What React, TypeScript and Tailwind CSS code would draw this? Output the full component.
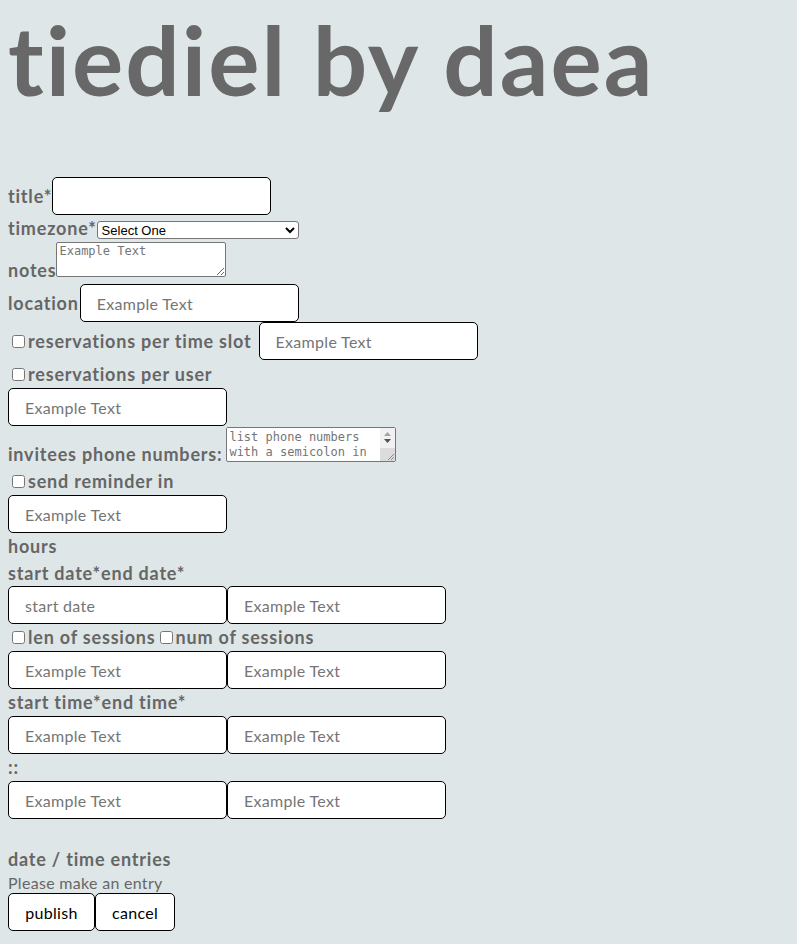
import React from "react";

const field =
  "w-[219px] h-[38px] shrink-0 bg-white border border-black rounded-[5px] pl-4 pr-2 text-[16px] font-normal tracking-[0.3px] text-black placeholder:text-[#757575] outline-none";
const box = "w-[13px] h-[13px] my-[3px] ml-[4px] mr-[3px] shrink-0 self-center";
const mono =
  "font-['DejaVu_Sans_Mono',monospace] text-[12px] leading-[15px] font-normal tracking-normal text-black placeholder:text-[#757575] outline-none";

function TextRow({ children }: { children: React.ReactNode }) {
  return <div className="flex items-center h-[27px]">{children}</div>;
}

function Pair({ first = "Example Text" }: { first?: string }) {
  return (
    <div className="flex h-[38px]">
      <input className={field} placeholder={first} />
      <input className={field} placeholder="Example Text" />
    </div>
  );
}

function Grip() {
  return (
    <svg width="8" height="8" viewBox="0 0 8 8" className="block">
      <path d="M7 1 L1 7 M7 4 L4 7" stroke="#8a8a8a" strokeWidth="1" />
    </svg>
  );
}

// fake classic scrollbar, headless chrome hides the real one
function PhoneArea() {
  return (
    <div className="w-[170px] h-[35px] shrink-0 self-start mt-px flex bg-white border border-[#767676] rounded-[2px]">
      <textarea
        className={`${mono} flex-1 min-w-0 h-[32px] px-[2px] pt-[2px] pb-0 resize-none overflow-hidden bg-white`}
        placeholder="list phone numbers with a semicolon in between each of them"
      />
      <div className="w-[15px] flex flex-col items-center bg-[#f1f1f1]">
        <svg width="9" height="7" viewBox="0 0 9 7" className="mt-[3px]">
          <path d="M4.5 1 L8 5 L1 5 Z" fill="#a3a3a3" />
        </svg>
        <svg width="9" height="7" viewBox="0 0 9 7">
          <path d="M1 1 L8 1 L4.5 5 Z" fill="#505050" />
        </svg>
        <div className="mt-auto w-full h-[13px] bg-[#dcdcdc] flex items-end justify-end">
          <Grip />
        </div>
      </div>
    </div>
  );
}

export default function App() {
  return (
    <div className="min-h-screen bg-[#dee6e8] px-2 pb-3 text-[#666666] font-['Lato',sans-serif] [font-variant-ligatures:none]">
      <h1 className="pt-[11px] text-[96px] leading-none font-bold tracking-[2px] text-[#686868]">
        tiediel by daea
      </h1>

      <form className="mt-[70px] text-[18px] font-bold leading-[27px] tracking-[0.8px]">
        <div className="flex items-baseline h-[38px]">
          <label>title*</label>
          <input className={field} />
        </div>

        <div className="flex items-baseline h-[27px]">
          <label>timezone*</label>
          <select className="w-[202px] h-[18px] bg-white text-black border border-[#767676] rounded-[3px] font-['Liberation_Sans',sans-serif] text-[13px] font-normal tracking-normal leading-none">
            <option>Select One</option>
          </select>
        </div>

        <div className="flex items-end h-[42px]">
          <label>notes</label>
          <textarea
            className={`${mono} w-[170px] h-[35px] shrink-0 self-start bg-white border border-[#767676] rounded-[2px] px-[2px] py-[1px]`}
            placeholder="Example Text"
          />
        </div>

        <div className="flex items-baseline h-[38px]">
          <label className="mr-px">location</label>
          <input className={field} placeholder="Example Text" />
        </div>

        <div className="flex items-baseline h-[39px]">
          <input type="checkbox" className={box} />
          <label className="mr-[7px]">reservations per time slot</label>
          <input className={field} placeholder="Example Text" />
        </div>

        <TextRow>
          <input type="checkbox" className={box} />
          <label>reservations per user</label>
        </TextRow>
        <div className="flex h-[38px]">
          <input className={field} placeholder="Example Text" />
        </div>

        <div className="flex items-end h-[42px]">
          <label className="mr-[4px]">invitees phone numbers:</label>
          <PhoneArea />
        </div>

        <TextRow>
          <input type="checkbox" className={box} />
          <label>send reminder in</label>
        </TextRow>
        <div className="flex h-[38px]">
          <input className={field} placeholder="Example Text" />
        </div>

        <TextRow>
          <span>hours</span>
        </TextRow>
        <div className="flex items-center h-[26px]">
          <label>start date*</label>
          <label>end date*</label>
        </div>
        <Pair first="start date" />

        <TextRow>
          <input type="checkbox" className={box} />
          <label>len of sessions</label>
          <input type="checkbox" className={box} />
          <label>num of sessions</label>
        </TextRow>
        <Pair />

        <TextRow>
          <label>start time*</label>
          <label>end time*</label>
        </TextRow>
        <Pair />

        <TextRow>
          <span>::</span>
        </TextRow>
        <Pair />

        <div className="h-[27px]" />
        <TextRow>
          <span>date / time entries</span>
        </TextRow>
        <p className="h-[20px] text-[16px] leading-[20px] font-normal tracking-[0.3px]">
          Please make an entry
        </p>

        <div className="flex h-[38px]">
          <button
            type="button"
            className="w-[87px] h-[38px] bg-white border border-black rounded-[5px] text-[16px] font-normal tracking-[0.3px] text-black"
          >
            publish
          </button>
          <button
            type="button"
            className="w-[80px] h-[38px] bg-white border border-black rounded-[5px] text-[16px] font-normal tracking-[0.3px] text-black"
          >
            cancel
          </button>
        </div>
      </form>
    </div>
  );
}
